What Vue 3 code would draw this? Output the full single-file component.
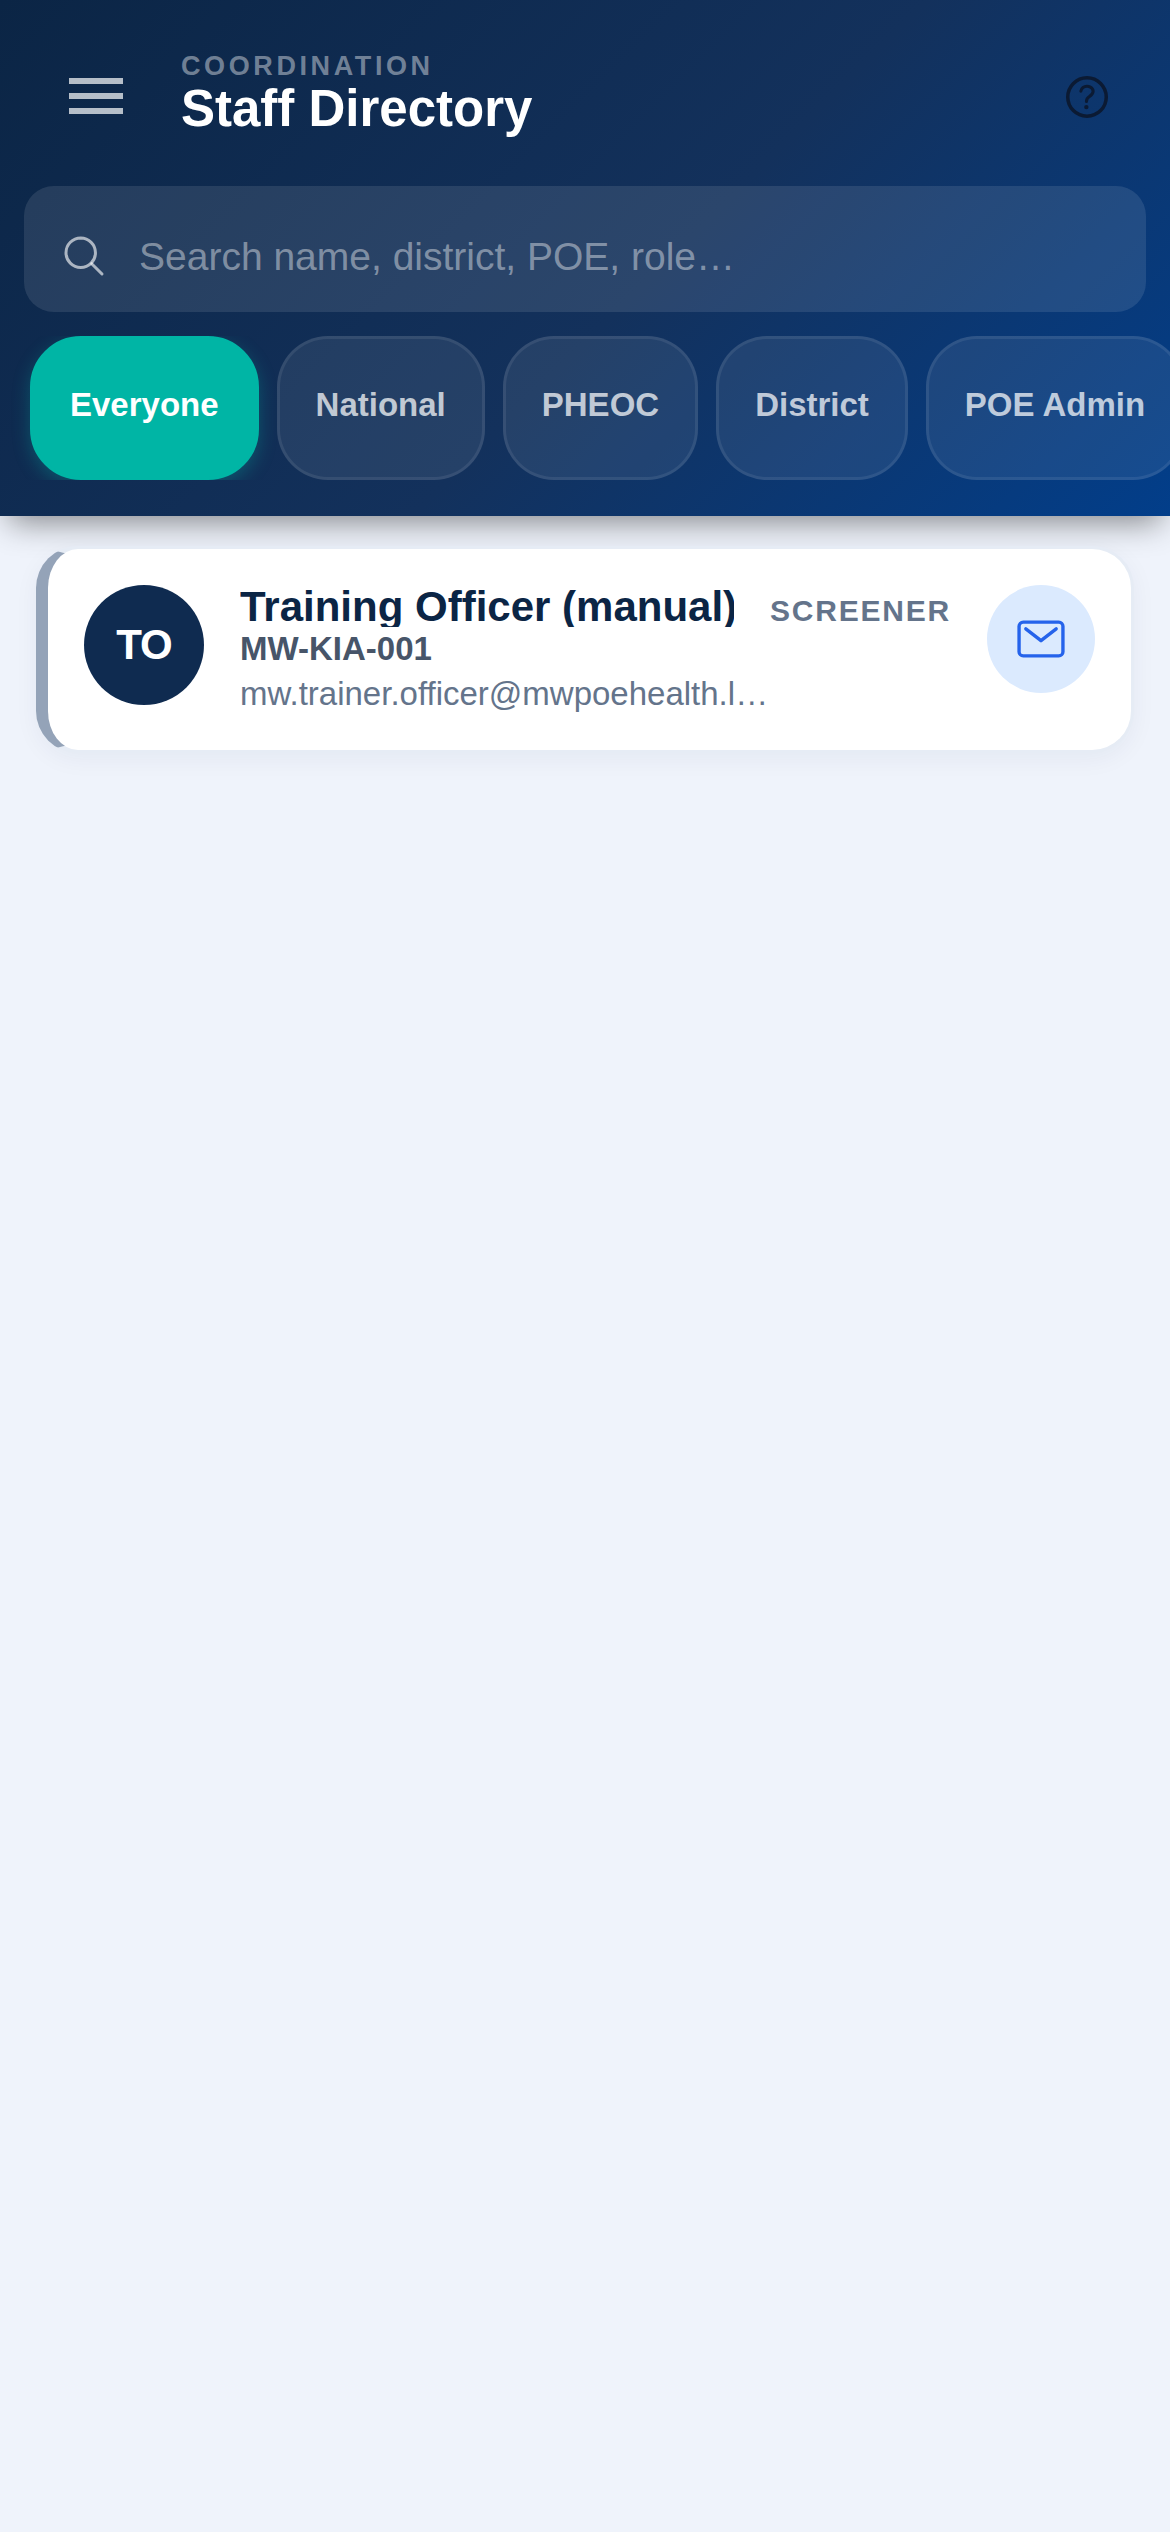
<template>
  <div class="page">
    <header class="top">
      <div class="toolbar">
        <button class="menu-btn" aria-label="Menu">
          <span></span><span></span><span></span>
        </button>
        <div class="heading">
          <div class="eyebrow">COORDINATION</div>
          <div class="title">Staff Directory</div>
        </div>
        <svg class="help" viewBox="0 0 512 512" aria-label="Help">
          <path d="M256 80a176 176 0 10176 176A176 176 0 00256 80z" fill="none" stroke="currentColor" stroke-miterlimit="10" stroke-width="32" />
          <path d="M200 202.29s.84-17.5 19.57-32.57C230.68 160.77 244 158.18 256 158c10.93-.14 20.69 1.67 26.53 4.45 10 4.76 29.47 16.38 29.47 41.09 0 26-17 37.81-36.37 50.8S251 281.43 251 296" fill="none" stroke="currentColor" stroke-linecap="round" stroke-miterlimit="10" stroke-width="28" />
          <circle cx="250" cy="348" r="20" fill="currentColor" />
        </svg>
      </div>

      <div class="search">
        <svg class="search-icon" viewBox="0 0 512 512">
          <path d="M221.09 64a157.09 157.09 0 10157.09 157.09A157.26 157.26 0 00221.09 64z" fill="none" stroke="currentColor" stroke-miterlimit="10" stroke-width="32" />
          <path d="M338.29 338.29L448 448" fill="none" stroke="currentColor" stroke-linecap="round" stroke-miterlimit="10" stroke-width="32" />
        </svg>
        <span class="placeholder">Search name, district, POE, role…</span>
      </div>

      <div class="chips">
        <div v-for="f in filters" :key="f" :class="['chip', { active: f === current }]">{{ f }}</div>
      </div>
    </header>

    <main class="list">
      <article v-for="s in staff" :key="s.code" class="card">
        <div class="avatar">{{ s.initials }}</div>
        <div class="info">
          <div class="name-row">
            <span class="name">{{ s.name }}</span>
            <span class="role">{{ s.role }}</span>
          </div>
          <div class="code">{{ s.code }}</div>
          <div class="email">{{ s.email }}</div>
        </div>
        <button class="mail-btn" aria-label="Email">
          <svg viewBox="0 0 512 512">
            <rect x="48" y="96" width="416" height="320" rx="40" ry="40" fill="none" stroke="currentColor" stroke-linecap="round" stroke-linejoin="round" stroke-width="32" />
            <path d="M112 160l144 112 144-112" fill="none" stroke="currentColor" stroke-linecap="round" stroke-linejoin="round" stroke-width="32" />
          </svg>
        </button>
      </article>
    </main>
  </div>
</template>

<script setup>
const filters = ['Everyone', 'National', 'PHEOC', 'District', 'POE Admin']
const current = 'Everyone'
const staff = [
  {
    initials: 'TO',
    name: 'Training Officer (manual)',
    role: 'SCREENER',
    code: 'MW-KIA-001',
    email: 'mw.trainer.officer@mwpoehealth.local'
  }
]
</script>

<style>
body {
  margin: 0;
  background: #eff3fb;
}
</style>

<style scoped>
.page {
  min-height: 2532px;
  background: #eff3fb;
  font-family: "Liberation Sans", Arial, sans-serif;
  overflow: hidden;
}

.top {
  height: 516px;
  box-sizing: border-box;
  background: linear-gradient(135deg, #0b2545 0%, #13315c 55%, #023e8a 100%);
  box-shadow: 0 15px 30px -9px rgba(0, 0, 0, 0.45);
}

.toolbar {
  height: 186px;
  box-sizing: border-box;
  padding: 6px 55px 0 69px;
  display: flex;
  align-items: center;
}

.menu-btn {
  width: 54px;
  padding: 0;
  border: 0;
  background: none;
  display: flex;
  flex-direction: column;
  gap: 9px;
}

.menu-btn span {
  display: block;
  height: 6px;
  background: rgba(255, 255, 255, 0.7);
}

.heading {
  margin-left: 58px;
  padding-bottom: 6px;
  flex: 1;
}

.eyebrow {
  font-size: 27px;
  line-height: 31px;
  font-weight: 700;
  letter-spacing: 3.6px;
  color: rgba(255, 255, 255, 0.42);
}

.title {
  font-size: 51px;
  line-height: 54px;
  font-weight: 700;
  color: #fff;
}

.help {
  width: 56px;
  height: 56px;
  margin-top: 2px;
  color: #0b1a33;
}

.search {
  height: 126px;
  margin: 0 24px;
  box-sizing: border-box;
  padding: 14px 36px 0;
  display: flex;
  align-items: center;
  background: rgba(255, 255, 255, 0.1);
  border-radius: 30px;
}

.search-icon {
  width: 48px;
  height: 48px;
  color: rgba(255, 255, 255, 0.62);
  flex-shrink: 0;
}

.placeholder {
  margin: 1px 0 0 31px;
  font-size: 39px;
  color: rgba(255, 255, 255, 0.42);
}

.chips {
  margin-top: 24px;
  padding-left: 30px;
  display: flex;
  gap: 18px;
  height: 144px;
  overflow: hidden;
}

.chip {
  flex-shrink: 0;
  height: 144px;
  box-sizing: border-box;
  padding: 0 36px 6px;
  display: flex;
  align-items: center;
  border: 3px solid rgba(255, 255, 255, 0.08);
  border-radius: 51px;
  background: rgba(255, 255, 255, 0.08);
  font-size: 33px;
  font-weight: 700;
  color: rgba(255, 255, 255, 0.72);
}

.chip.active {
  padding: 0 37px 6px;
  background: #00b5a5;
  border-color: #00b5a5;
  color: #fff;
  box-shadow: 0 6px 18px rgba(0, 181, 165, 0.3);
}

.list {
  padding: 30px 36px;
}

.card {
  display: flex;
  align-items: flex-start;
  gap: 36px;
  padding: 36px;
  background: #fff;
  border: 3px solid #e6ecf5;
  border-left: 12px solid #94a3b8;
  border-radius: 42px;
  box-shadow: 0 6px 24px rgba(11, 37, 69, 0.05);
}

.avatar {
  width: 120px;
  height: 120px;
  flex-shrink: 0;
  border-radius: 50%;
  background: #0f2b50;
  color: #fff;
  font-size: 42px;
  font-weight: 700;
  letter-spacing: -1px;
  display: flex;
  align-items: center;
  justify-content: center;
}

.info {
  flex: 1;
  min-width: 0;
}

.name-row {
  display: flex;
  align-items: baseline;
  justify-content: space-between;
  gap: 36px;
}

.name {
  box-sizing: border-box;
  padding-top: 1px;
  font-size: 42px;
  line-height: 42px;
  height: 42px;
  font-weight: 700;
  color: #0b2545;
  overflow: hidden;
  white-space: nowrap;
}

.role {
  font-size: 30px;
  font-weight: 700;
  letter-spacing: 1.8px;
  color: #64748b;
}

.code {
  margin-top: 2px;
  font-size: 33px;
  font-weight: 700;
  color: #475569;
}

.email {
  margin: 7px 0 1px;
  max-width: 530px;
  font-size: 33px;
  color: #64748b;
  white-space: nowrap;
  overflow: hidden;
  text-overflow: ellipsis;
}

.mail-btn {
  width: 108px;
  height: 108px;
  flex-shrink: 0;
  padding: 0;
  border: 0;
  border-radius: 50%;
  background: #dbeafe;
  color: #2563eb;
  display: flex;
  align-items: center;
  justify-content: center;
}

.mail-btn svg {
  width: 54px;
  height: 54px;
}
</style>
